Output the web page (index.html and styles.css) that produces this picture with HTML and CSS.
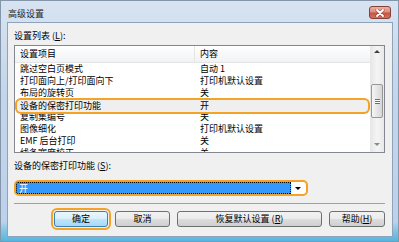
FILE: index.html
```html
<!DOCTYPE html>
<html lang="zh-CN">
<head>
    <meta charset="UTF-8">
    <meta name="viewport" content="width=device-width, initial-scale=1.0">
    <title>高级设置</title>
    <link rel="stylesheet" href="styles.css">
</head>
<body>
    <div class="window">
        <div class="titlebar">
            <span class="title">高级设置</span>
            <button class="close" type="button">
                <svg width="10" height="8" viewBox="0 0 10 8">
                    <path d="M2 1 L8 7 M8 1 L2 7" stroke="#7a2e24" stroke-width="3.2" stroke-linecap="round" opacity="0.55"/>
                    <path d="M2 1 L8 7 M8 1 L2 7" stroke="#ffffff" stroke-width="1.8" stroke-linecap="round"/>
                </svg>
            </button>
        </div>
        <div class="client">
            <div class="label">设置列表 (<u>L</u>):</div>
            <div class="listbox">
                <div class="list-main">
                    <div class="list-head">
                        <span class="col-name">设置项目</span>
                        <span class="col-value">内容</span>
                    </div>
                    <div class="row"><span class="col-name">跳过空白页模式</span><span class="col-value">自动 1</span></div>
                    <div class="row"><span class="col-name">打印面向上/打印面向下</span><span class="col-value">打印机默认设置</span></div>
                    <div class="row"><span class="col-name">布局的旋转页</span><span class="col-value">关</span></div>
                    <div class="row sel"><span class="col-name">设备的保密打印功能</span><span class="col-value">开</span></div>
                    <div class="row"><span class="col-name">复制集编号</span><span class="col-value">关</span></div>
                    <div class="row"><span class="col-name">图像细化</span><span class="col-value">打印机默认设置</span></div>
                    <div class="row"><span class="col-name">EMF 后台打印</span><span class="col-value">关</span></div>
                    <div class="row"><span class="col-name">线条宽度校正</span><span class="col-value">关</span></div>
                </div>
                <div class="scrollbar">
                    <div class="sb-btn"><span class="arrow-up"></span></div>
                    <div class="sb-thumb"><span class="grip"></span></div>
                    <div class="sb-track"></div>
                    <div class="sb-btn sb-down"><span class="arrow-down"></span></div>
                </div>
            </div>
            <div class="label label-gap">设备的保密打印功能 (<u>S</u>):</div>
            <div class="combo">
                <span class="combo-value">开</span>
                <span class="combo-arrow"><span class="arrow-down dark"></span></span>
            </div>
            <div class="sep"></div>
            <div class="buttons">
                <button type="button" class="btn btn-default btn-ok">确定</button>
                <button type="button" class="btn btn-cancel">取消</button>
                <button type="button" class="btn btn-reset">恢复默认设置 (<u>R</u>)</button>
                <button type="button" class="btn btn-help">帮助(<u>H</u>)</button>
            </div>
        </div>
    </div>
</body>
</html>
```

FILE: styles.css
```css
* {
    box-sizing: border-box;
}
body {
    margin: 0;
    font-family: "Noto Sans CJK SC", "Noto Sans", sans-serif;
    font-size: 9px;
    color: #000;
    background: #b9cde5;
}
u {
    text-decoration: underline;
}

/* window frame */
.window {
    width: 399px;
    height: 242px;
    display: flex;
    flex-direction: column;
    padding: 0 5px 4px 6px;
    border: 1px solid #8596ab;
    background: linear-gradient(#d7e3f1, #c3d5ea 40%, #bcd2ea 92%, #7cc4e2 96%, #55b6de);
}
.titlebar {
    height: 21px;
    display: flex;
    align-items: flex-start;
    justify-content: space-between;
}
.title {
    margin-top: 7px;
    padding-left: 1px;
    line-height: 12px;
    color: #1e1e1e;
}
.close {
    width: 22px;
    height: 13px;
    margin: 5px 2px 0 0;
    padding: 0;
    border: 1px solid #84403a;
    border-radius: 3px;
    background: linear-gradient(#eab0a4, #de8c7c 48%, #c85240 52%, #d2705c);
    display: flex;
    align-items: center;
    justify-content: center;
}

/* dialog body */
.client {
    height: 215px;
    display: flex;
    flex-direction: column;
    padding: 7px 7px 9px 6px;
    border: 1px solid #8ea2ba;
    background: #f0f0f0;
}
.label {
    height: 12px;
    line-height: 12px;
    white-space: nowrap;
}
.label-gap {
    margin-top: 7px;
}

/* list view */
.listbox {
    margin-top: 3px;
    height: 108px;
    display: flex;
    border: 1px solid #828790;
    background: #fff;
}
.list-main {
    flex: 1;
    overflow: hidden;
}
.list-head {
    display: flex;
    height: 17px;
    line-height: 16px;
    border-bottom: 1px solid #e5e5e5;
    background: linear-gradient(#ffffff, #f1f2f4);
}
.col-name {
    width: 180px;
    padding-left: 5px;
    flex-shrink: 0;
}
.col-value {
    padding-left: 5px;
}
.list-head .col-name {
    border-right: 1px solid #e5e5e5;
}
.row {
    display: flex;
    height: 12px;
    line-height: 12px;
    white-space: nowrap;
}
.row.sel {
    position: relative;
    z-index: 1;
    height: 16px;
    line-height: 16px;
    margin: -1px 0 -3px;
    border-radius: 6px;
    background: #efefef;
    box-shadow: inset 0 0 0 2px #f5a326;
}

/* scrollbar */
.scrollbar {
    width: 14px;
    display: flex;
    flex-direction: column;
    background: linear-gradient(90deg, #e6e6e6, #f4f4f4 50%, #e9e9e9);
}
.sb-btn {
    height: 11px;
    display: flex;
    align-items: center;
    justify-content: center;
}
.sb-down {
    height: 16px;
}
.sb-thumb {
    margin: 27px 1px 0;
    height: 34px;
    border: 1px solid #979797;
    border-radius: 2px;
    background: linear-gradient(90deg, #f5f5f5, #e6e6e6 50%, #d6d6d6);
    display: flex;
    align-items: center;
    justify-content: center;
}
.grip {
    width: 5px;
    height: 5px;
    background: repeating-linear-gradient(#6e6e6e 0 1px, #ffffff 1px 2px);
}
.sb-track {
    flex: 1;
}
.arrow-up {
    width: 0;
    height: 0;
    border-left: 3px solid transparent;
    border-right: 3px solid transparent;
    border-bottom: 3px solid #404040;
}
.arrow-down {
    width: 0;
    height: 0;
    border-left: 3px solid transparent;
    border-right: 3px solid transparent;
    border-top: 3px solid #8a8a8a;
}
.arrow-down.dark {
    border-top-color: #000;
}

/* combo box */
.combo {
    margin-top: 8px;
    width: 294px;
    height: 16px;
    display: flex;
    padding: 0 1px 0 0;
    border: 2px solid #f5a326;
    border-radius: 5px;
    background: #fff;
}
.combo-value {
    flex: 1;
    padding-left: 2px;
    line-height: 12px;
    color: #fff;
    background: #3399ff;
    border: 1px dotted #000;
    border-radius: 2px 0 0 2px;
}
.combo-arrow {
    width: 14px;
    display: flex;
    align-items: center;
    justify-content: center;
}

.sep {
    margin-top: 7px;
    height: 1px;
    background: #a0a0a0;
}

/* buttons */
.buttons {
    margin-top: 7px;
    display: flex;
    justify-content: flex-end;
    gap: 7px;
}
.btn {
    height: 16px;
    padding: 0;
    font: inherit;
    line-height: 14px;
    color: #000;
    border: 1px solid #707070;
    border-radius: 3px;
    background: linear-gradient(#f2f2f2, #ebebeb 49%, #dddddd 50%, #cfcfcf);
}
.btn-default {
    border-color: #3c7fb1;
    background: linear-gradient(#eaf6fd, #d9f0fc 49%, #bee6fd 50%, #a7d9f5);
    outline: 2px solid #f5a326;
    outline-offset: 1px;
}
.btn-ok {
    width: 54px;
}
.btn-cancel {
    width: 55px;
}
.btn-reset {
    width: 145px;
}
.btn-help {
    width: 56px;
}
```
